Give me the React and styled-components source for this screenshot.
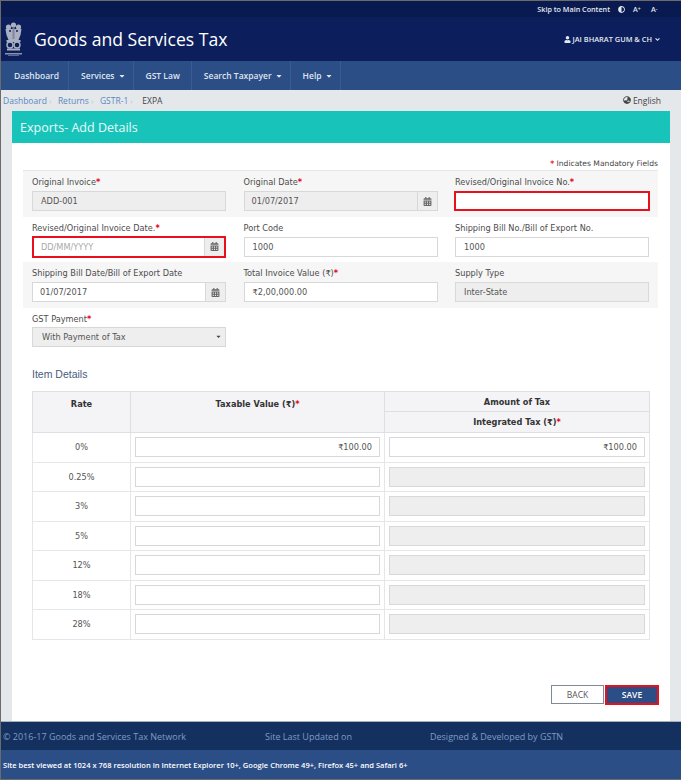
import React from 'react';
import styled, { createGlobalStyle } from 'styled-components';
import { FaUser, FaAngleDown, FaGlobeAsia, FaAdjust, FaCaretDown, FaCalendarAlt } from 'react-icons/fa';

const GlobalStyle = createGlobalStyle`
  html, body { margin: 0; padding: 0; background: #e5e8eb; }
  body { font-family: "DejaVu Sans", sans-serif; }
  * { box-sizing: border-box; }
`;

const Shell = styled.div`
  width: 681px;
  height: 780px;
  display: flex;
  flex-direction: column;
  border-top: 1px solid #6b6b6b;
  border-left: 1px solid #6b6b6b;
  border-bottom: 1px solid #6b6b6b;
  overflow: hidden;
`;

const TopBar = styled.div`
  height: 16px;
  flex: none;
  background: #081a50;
  display: flex;
  align-items: center;
  justify-content: flex-end;
  padding-right: 20px;
`;

const TopLink = styled.span`
  margin-left: 8px;
  display: inline-flex;
  align-items: center;
  font: 600 7.2px "Open Sans", sans-serif;
  color: #e4e8f0;
`;

const FontSizer = styled(TopLink)`
  width: 10px;
`;

const Sup = styled.sup`
  font-size: 5px;
  line-height: 0;
`;

const Masthead = styled.header`
  height: 44px;
  flex: none;
  background: #0c1f5c;
  display: flex;
  align-items: center;
  padding: 0 20px 0 2px;
`;

const Emblem = styled.svg`
  width: 21px;
  height: 35px;
  flex: none;
  margin-top: 1px;
`;

const Title = styled.h1`
  margin: 0 0 0 10px;
  flex: 1;
  font: 400 17.6px "Open Sans", sans-serif;
  color: #fff;
`;

const UserName = styled.div`
  display: flex;
  align-items: center;
  gap: 2px;
  font: 600 7.4px "Open Sans", sans-serif;
  color: #e4e8f0;
`;

const Nav = styled.nav`
  height: 29px;
  flex: none;
  background: #2c4e86;
  display: flex;
`;

const NavItem = styled.a`
  display: flex;
  align-items: center;
  gap: 3px;
  padding: 0 ${(p) => p.$right || '10px'} 0 ${(p) => p.$left || '12px'};
  border-right: 1px solid #3b5c92;
  font: 600 8.5px "Open Sans", sans-serif;
  color: #dfe5f0;
`;

const Crumbs = styled.div`
  height: 20px;
  flex: none;
  display: flex;
  align-items: center;
  padding: 0 20px 0 2px;
  font: 400 8.5px "Open Sans", sans-serif;
`;

const Crumb = styled.span`
  color: ${(p) => (p.$current ? '#444' : '#5b86c0')};
`;

const CrumbSep = styled.span`
  color: #b9bec6;
  width: ${(p) => p.$w || '11px'};
  padding-left: 2px;
  font-size: 8px;
`;

const Lang = styled.span`
  margin-left: auto;
  display: flex;
  align-items: center;
  gap: 2px;
  color: #444;
`;

const Page = styled.main`
  flex: 1;
  margin: 1px 11px 0;
  background: #fff;
  display: flex;
  flex-direction: column;
`;

const PageHead = styled.div`
  height: 32px;
  flex: none;
  background: #18c4ba;
  display: flex;
  align-items: center;
  padding-left: 8px;
  font: 400 12.5px "Open Sans", sans-serif;
  color: #eafaf9;
`;

const Mandatory = styled.div`
  height: 27px;
  flex: none;
  display: flex;
  align-items: flex-end;
  justify-content: flex-end;
  padding: 0 12px 2px 0;
  font-size: 7.6px;
  color: #444;
`;

const Star = styled.span`
  color: #e8000f;
  font-weight: 700;
`;

const FormArea = styled.div`
  margin: 0 12px 0 11px;
  border-top: 1px solid #e6e6e6;
`;

const FormRow = styled.div`
  height: 45.5px;
  padding: 5px 9px 0;
  display: grid;
  grid-template-columns: 194px 194px 194px;
  column-gap: 17.5px;
  background: ${(p) => (p.$shade ? '#f6f6f6' : '#fff')};
`;

const Label = styled.label`
  display: block;
  height: 15px;
  line-height: 13px;
  font-size: 8.2px;
  color: #4c4c4c;
  white-space: nowrap;
`;

const InputBox = styled.div`
  height: 20px;
  display: flex;
  align-items: center;
  padding: 0 7px 0 8px;
  background: ${(p) => (p.$disabled ? '#eee' : '#fff')};
  border: ${(p) => (p.$error ? '2px solid #e8101c' : '1px solid #d8d8d8')};
  margin: ${(p) => (p.$error ? '0 -1px' : '0')};
  justify-content: ${(p) => (p.$right ? 'flex-end' : 'flex-start')};
  font-size: 8.2px;
  color: #555;
`;

const DateField = styled.div`
  height: ${(p) => (p.$error ? '22px' : '20px')};
  margin-top: ${(p) => (p.$error ? '-1px' : '0')};
  display: flex;
  border: ${(p) => (p.$error ? '2px solid #e8101c' : '1px solid #d8d8d8')};
`;

const DateValue = styled.div`
  flex: 1;
  display: flex;
  align-items: center;
  padding-left: 7px;
  background: ${(p) => (p.$disabled ? '#eee' : '#fff')};
  font-size: 8.2px;
  color: ${(p) => (p.$placeholder ? '#a9a9a9' : '#555')};
`;

const DateAddon = styled.div`
  width: 20px;
  flex: none;
  display: flex;
  align-items: center;
  justify-content: center;
  background: #eee;
  border-left: 1px solid #d8d8d8;
  color: #666;
  font-size: 9px;
`;

const SelectBox = styled(InputBox)`
  justify-content: space-between;
  padding: 0 3px 0 9px;
  background: #eee;
  margin-top: -1px;
`;

const SectionTitle = styled.h2`
  margin: 14px 0 0 20px;
  height: 24px;
  font: 400 10.5px "Liberation Sans", sans-serif;
  line-height: 15px;
  color: #4a5c7c;
`;

const TableWrap = styled.div`
  margin: 0 21px 0 20px;
`;

const Table = styled.table`
  width: 617px;
  table-layout: fixed;
  border-collapse: collapse;
`;

const Th = styled.th`
  background: #f4f4f6;
  border: 1px solid #dcdfe4;
  height: ${(p) => p.$h || '20px'};
  padding: ${(p) => p.$pad || '0'};
  vertical-align: ${(p) => p.$valign || 'middle'};
  font-size: 8.2px;
  font-weight: 700;
  color: #333;
`;

const Td = styled.td`
  border: 1px solid #e4e6ea;
  height: 29.5px;
  padding: 0 4px;
  text-align: center;
  font-size: 8.2px;
  color: #555;
`;

const Actions = styled.div`
  margin-top: 45px;
  padding-right: 11px;
  display: flex;
  justify-content: flex-end;
  gap: 1px;
`;

const BackButton = styled.button`
  width: 53px;
  height: 19px;
  padding: 0;
  background: #fff;
  border: 1px solid #7f8a99;
  font: 400 8.5px "Open Sans", sans-serif;
  color: #555;
`;

const SaveButton = styled.button`
  width: 54px;
  height: 20px;
  padding: 0;
  background: #2c4e86;
  border: 2px solid #e8101c;
  font: 600 8.5px "Open Sans", sans-serif;
  color: #fff;
`;

const FooterMain = styled.footer`
  height: 29px;
  flex: none;
  background: #14305f;
  border-top: 1px solid #a8b0bb;
  display: flex;
  align-items: center;
  padding-left: 2px;
  font: 400 9px "Open Sans", sans-serif;
  color: #7f9cc4;
`;

const FooterCell = styled.span`
  width: ${(p) => p.$w};
  flex: none;
`;

const FooterNote = styled.div`
  height: 29px;
  flex: none;
  background: #2c4e86;
  display: flex;
  align-items: center;
  padding-left: 2px;
  font: 600 7.55px "Open Sans", sans-serif;
  color: #fff;
`;

// rough drawing of the state emblem, only a few px wide in the picture
const EmblemArt = () => (
  <Emblem viewBox="0 0 21 35" fill="#aab0bf">
    <circle cx="10.5" cy="3" r="2.6" />
    <circle cx="5.5" cy="5" r="2.6" />
    <circle cx="15.5" cy="5" r="2.6" />
    <path d="M2.5 7h16l-1 6-2 5H5.500l-2-5z" />
    <circle cx="7" cy="9" r="1" fill="#0c1f5c" />
    <circle cx="14" cy="9" r="1" fill="#0c1f5c" />
    <path d="M9.500 6v11h2V6z" fill="#7f87a0" />
    <rect x="3.500" y="18" width="14" height="2" />
    <circle cx="7" cy="23" r="3" fill="none" stroke="#aab0bf" strokeWidth="1.400" />
    <circle cx="14" cy="23" r="3" fill="none" stroke="#aab0bf" strokeWidth="1.400" />
    <rect x="4" y="26.500" width="13" height="2" />
    <rect x="2" y="31" width="17" height="1.500" opacity="0.8" />
    <rect x="5" y="33" width="11" height="1" opacity="0.5" />
  </Emblem>
);

const Required = () => <Star>*</Star>;

const DateInput = ({ value, disabled, placeholder, error }) => (
  <DateField $error={error}>
    <DateValue $disabled={disabled} $placeholder={placeholder}>{value}</DateValue>
    <DateAddon><FaCalendarAlt /></DateAddon>
  </DateField>
);

const rates = ['0%', '0.25%', '3%', '5%', '12%', '18%', '28%'];

export default function App() {
  return (
    <>
      <GlobalStyle />
      <Shell>
        <TopBar>
          <TopLink>Skip to Main Content</TopLink>
          <TopLink><FaAdjust size={7} /></TopLink>
          <FontSizer>A<Sup>+</Sup></FontSizer>
          <FontSizer>A<Sup>-</Sup></FontSizer>
        </TopBar>
        <Masthead>
          <EmblemArt />
          <Title>Goods and Services Tax</Title>
          <UserName>
            <FaUser size={7} /> JAI BHARAT GUM &amp; CH <FaAngleDown size={7} />
          </UserName>
        </Masthead>
        <Nav>
          <NavItem $left="13px" $right="9px">Dashboard</NavItem>
          <NavItem $right="7px">Services<FaCaretDown size={8} /></NavItem>
          <NavItem $right="11px">GST Law</NavItem>
          <NavItem $right="7px">Search Taxpayer<FaCaretDown size={8} /></NavItem>
          <NavItem $right="7px">Help<FaCaretDown size={8} /></NavItem>
        </Nav>
        <Crumbs>
          <Crumb>Dashboard</Crumb><CrumbSep>›</CrumbSep>
          <Crumb>Returns</Crumb><CrumbSep>›</CrumbSep>
          <Crumb>GSTR-1</Crumb><CrumbSep $w="14px">›</CrumbSep>
          <Crumb $current>EXPA</Crumb>
          <Lang><FaGlobeAsia size={8} /> English</Lang>
        </Crumbs>
        <Page>
          <PageHead>Exports- Add Details</PageHead>
          <Mandatory><Star>*</Star>&nbsp;Indicates Mandatory Fields</Mandatory>
          <FormArea>
            <FormRow $shade>
              <div>
                <Label>Original Invoice<Required /></Label>
                <InputBox $disabled>ADD-001</InputBox>
              </div>
              <div>
                <Label>Original Date<Required /></Label>
                <DateInput value="01/07/2017" disabled />
              </div>
              <div>
                <Label>Revised/Original Invoice No.<Required /></Label>
                <InputBox $error />
              </div>
            </FormRow>
            <FormRow>
              <div>
                <Label>Revised/Original Invoice Date.<Required /></Label>
                <DateInput value="DD/MM/YYYY" placeholder error />
              </div>
              <div>
                <Label>Port Code</Label>
                <InputBox>1000</InputBox>
              </div>
              <div>
                <Label>Shipping Bill No./Bill of Export No.</Label>
                <InputBox>1000</InputBox>
              </div>
            </FormRow>
            <FormRow $shade>
              <div>
                <Label>Shipping Bill Date/Bill of Export Date</Label>
                <DateInput value="01/07/2017" />
              </div>
              <div>
                <Label>Total Invoice Value (₹)<Required /></Label>
                <InputBox>₹2,00,000.00</InputBox>
              </div>
              <div>
                <Label>Supply Type</Label>
                <InputBox $disabled>Inter-State</InputBox>
              </div>
            </FormRow>
            <FormRow>
              <div>
                <Label>GST Payment<Required /></Label>
                <SelectBox>With Payment of Tax <FaCaretDown size={7} color="#444" /></SelectBox>
              </div>
            </FormRow>
          </FormArea>
          <SectionTitle>Item Details</SectionTitle>
          <TableWrap>
            <Table>
              <colgroup>
                <col width="98" />
                <col width="254" />
                <col width="265" />
              </colgroup>
              <thead>
                <tr>
                  <Th rowSpan={2} $valign="top" $pad="7px 0 0">Rate</Th>
                  <Th rowSpan={2} $valign="top" $pad="7px 0 0">Taxable Value (₹)<Required /></Th>
                  <Th>Amount of Tax</Th>
                </tr>
                <tr>
                  <Th $h="21px">Integrated Tax (₹)<Required /></Th>
                </tr>
              </thead>
              <tbody>
                {rates.map((rate, idx) => (
                  <tr key={rate}>
                    <Td>{rate}</Td>
                    <Td><InputBox $right>{idx === 0 && '₹100.00'}</InputBox></Td>
                    <Td>
                      <InputBox $right $disabled={idx !== 0}>{idx === 0 && '₹100.00'}</InputBox>
                    </Td>
                  </tr>
                ))}
              </tbody>
            </Table>
          </TableWrap>
          <Actions>
            <BackButton>BACK</BackButton>
            <SaveButton>SAVE</SaveButton>
          </Actions>
        </Page>
        <FooterMain>
          <FooterCell $w="262px">© 2016-17 Goods and Services Tax Network</FooterCell>
          <FooterCell $w="165px">Site Last Updated on</FooterCell>
          <span>Designed &amp; Developed by GSTN</span>
        </FooterMain>
        <FooterNote>
          Site best viewed at 1024 x 768 resolution in Internet Explorer 10+, Google Chrome 49+, Firefox 45+ and Safari 6+
        </FooterNote>
      </Shell>
    </>
  );
}
